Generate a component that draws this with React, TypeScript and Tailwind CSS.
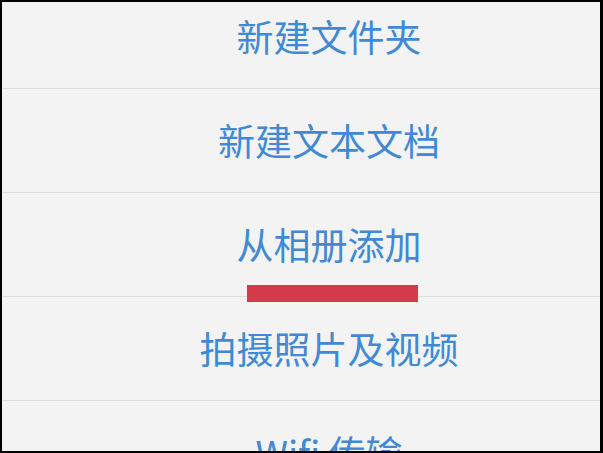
const items = ['新建文件夹', '新建文本文档', '从相册添加', '拍摄照片及视频', 'Wifi 传输'];

export default function App() {
  return (
    <div className="h-[453px] w-[603px] overflow-hidden bg-black pb-[2px] pl-[2px] pr-[3px] pt-[2px]">
      <div className="relative h-full w-full overflow-hidden bg-[#f3f3f3]">
        <ul className="-mt-[17px] flex flex-col">
          {items.map((label) => (
            <li
              key={label}
              className="flex h-[104px] items-center justify-center border-b border-[#dcdcdc] pl-[56px] text-[37px] leading-none text-[#4189d4]"
              style={{ fontFamily: '"PingFang SC", "Noto Sans CJK SC", "Noto Sans", sans-serif' }}
            >
              {label}
            </li>
          ))}
        </ul>
        {/* red highlight mark under the album option */}
        <div className="absolute left-[245px] top-[283px] h-[17px] w-[171px] bg-[#d33a4c]" />
      </div>
    </div>
  );
}
